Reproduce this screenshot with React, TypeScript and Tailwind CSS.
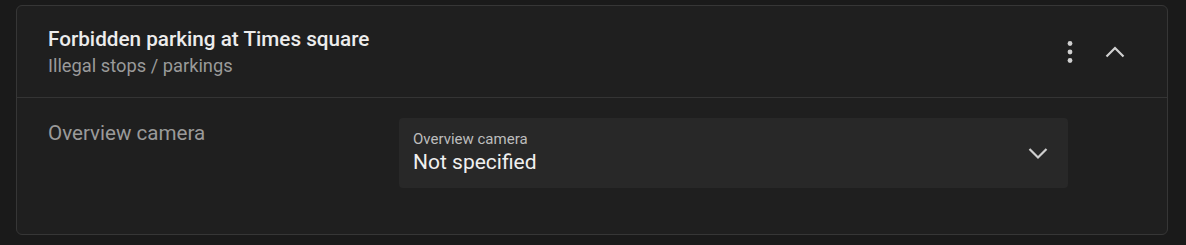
import React from "react";

export default function App() {
  return (
    <div
      className="w-[1186px] h-[245px] bg-[#1a1a1a] pt-[5px] pl-[16px] pr-[18px]"
      style={{ fontFamily: "Roboto, 'Noto Sans', sans-serif" }}
    >
      <div className="h-[230px] rounded-[6px] border border-[#363636] bg-[#1f1f1f] flex flex-col">
        <div className="h-[92px] border-b border-[#343434] flex items-center pl-[31px] pr-[40px]">
          <div className="flex-1 flex flex-col pt-[1px]">
            <div className="text-[20.7px] leading-[26px] font-medium text-[#ececec]">
              Forbidden parking at Times square
            </div>
            <div className="text-[18.3px] leading-[24px] mt-[2px] text-[#9a9a9a]">
              Illegal stops / parkings
            </div>
          </div>
          <div className="flex items-center gap-[21px]">
            <svg width="24" height="24" viewBox="0 0 24 24" fill="#cfcfcf">
              <circle cx="12" cy="3.5" r="2.4" />
              <circle cx="12" cy="12" r="2.4" />
              <circle cx="12" cy="20.5" r="2.4" />
            </svg>
            <svg width="24" height="24" viewBox="0 0 24 24" fill="none" stroke="#d0d0d0" strokeWidth="2.2">
              <path d="M3.5 16.5L12 8l8.5 8.5" />
            </svg>
          </div>
        </div>
        <div className="flex pl-[31px] pt-[20px]">
          <div className="w-[351px] text-[20.6px] leading-[26px] text-[#9a9a9a] pt-[2px]">
            Overview camera
          </div>
          <div className="w-[669px] h-[70px] rounded-[4px] bg-[#282828] flex items-center pl-[14px] pr-[18px]">
            <div className="flex-1 flex flex-col">
              <div className="text-[15px] leading-[19px] text-[#bdbdbd]">Overview camera</div>
              <div className="text-[21px] leading-[27px] text-[#f0f0f0]">Not specified</div>
            </div>
            <svg width="24" height="24" viewBox="0 0 24 24" fill="none" stroke="#cfcfcf" strokeWidth="2.2">
              <path d="M3.5 8l8.5 8.5L20.5 8" />
            </svg>
          </div>
        </div>
      </div>
    </div>
  );
}
